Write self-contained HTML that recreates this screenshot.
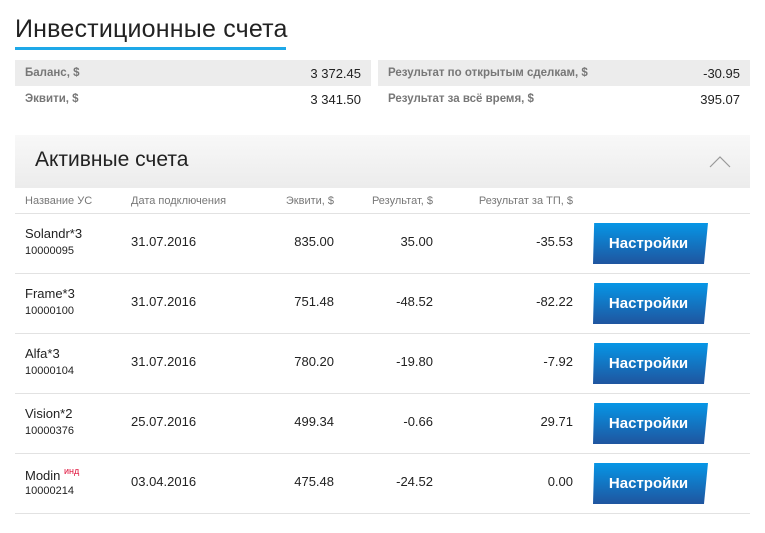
<!DOCTYPE html>
<html><head><meta charset="utf-8"><style>
body{margin:0;background:#fff;font-family:"Liberation Sans",Arial,sans-serif;width:765px;height:533px;position:relative;overflow:hidden;color:#222}
.a{position:absolute;white-space:nowrap}
.h1{left:15px;top:15px;font-size:25px;font-weight:300;color:#222;letter-spacing:0.2px}
.ul{left:15px;top:47px;width:271px;height:3px;background:#1ea8e8}
.bx{position:absolute;height:26px;font-size:12px}
.bx .l{position:absolute;left:10px;top:7px;color:#777;font-weight:bold;font-size:11.5px}
.bx .r{position:absolute;right:10px;top:6px;font-size:13px;color:#222}
.sec{left:15px;top:135px;width:735px;height:53px;background:linear-gradient(#f8f8f8,#ececec)}
.th{font-size:11px;color:#777;top:195px}
.ln{position:absolute;left:15px;width:735px;height:1px;background:#e2e2e2}
.c{font-size:13px;color:#222}
.id{font-size:11px;color:#222}
.btn{position:absolute;left:593px;width:115px;height:41px;background:linear-gradient(#0696e6,#1f559f);clip-path:polygon(1% 0,100% 0,96.5% 100%,0 100%);color:#fff;font-weight:bold;font-size:15px;text-align:center;line-height:41px;text-indent:-4px}
</style></head><body>
<div class="a h1">Инвестиционные счета</div>
<div class="a ul"></div>
<div class="bx" style="left:15px;top:60px;width:356px;background:#ececec"><span class="l">Баланс, $</span><span class="r">3 372.45</span></div>
<div class="bx" style="left:15px;top:86px;width:356px"><span class="l">Эквити, $</span><span class="r">3 341.50</span></div>
<div class="bx" style="left:378px;top:60px;width:372px;background:#ececec"><span class="l">Результат по открытым сделкам, $</span><span class="r">-30.95</span></div>
<div class="bx" style="left:378px;top:86px;width:372px"><span class="l">Результат за всё время, $</span><span class="r">395.07</span></div>
<div class="a sec"></div>
<div class="a" style="left:35px;top:148px;font-size:21px;font-weight:300;color:#222">Активные счета</div>
<svg class="a" style="left:709px;top:155px" width="22" height="13"><path d="M1 12 L11 2 L21 12" stroke="#999" fill="none" stroke-width="1.2"/></svg>
<div class="a th" style="left:25px">Название УС</div>
<div class="a th" style="left:131px">Дата подключения</div>
<div class="a th" style="right:431px">Эквити, $</div>
<div class="a th" style="right:332px">Результат, $</div>
<div class="a th" style="right:192px">Результат за ТП, $</div>
<div class="ln" style="top:213px"></div>

<div class="a c" style="left:25px;top:226px">Solandr*3</div><div class="a id" style="left:25px;top:245px">10000095</div>
<div class="a c" style="left:131px;top:234px">31.07.2016</div><div class="a c" style="right:431px;top:234px">835.00</div><div class="a c" style="right:332px;top:234px">35.00</div><div class="a c" style="right:192px;top:234px">-35.53</div>
<div class="btn" style="top:223px">Настройки</div><div class="ln" style="top:273px"></div>

<div class="a c" style="left:25px;top:286px">Frame*3</div><div class="a id" style="left:25px;top:305px">10000100</div>
<div class="a c" style="left:131px;top:294px">31.07.2016</div><div class="a c" style="right:431px;top:294px">751.48</div><div class="a c" style="right:332px;top:294px">-48.52</div><div class="a c" style="right:192px;top:294px">-82.22</div>
<div class="btn" style="top:283px">Настройки</div><div class="ln" style="top:333px"></div>

<div class="a c" style="left:25px;top:346px">Alfa*3</div><div class="a id" style="left:25px;top:365px">10000104</div>
<div class="a c" style="left:131px;top:354px">31.07.2016</div><div class="a c" style="right:431px;top:354px">780.20</div><div class="a c" style="right:332px;top:354px">-19.80</div><div class="a c" style="right:192px;top:354px">-7.92</div>
<div class="btn" style="top:343px">Настройки</div><div class="ln" style="top:393px"></div>

<div class="a c" style="left:25px;top:406px">Vision*2</div><div class="a id" style="left:25px;top:425px">10000376</div>
<div class="a c" style="left:131px;top:414px">25.07.2016</div><div class="a c" style="right:431px;top:414px">499.34</div><div class="a c" style="right:332px;top:414px">-0.66</div><div class="a c" style="right:192px;top:414px">29.71</div>
<div class="btn" style="top:403px">Настройки</div><div class="ln" style="top:453px"></div>

<div class="a c" style="left:25px;top:466px">Modin <sup style="color:#e0103a;font-size:9px;vertical-align:6px">инд</sup></div><div class="a id" style="left:25px;top:485px">10000214</div>
<div class="a c" style="left:131px;top:474px">03.04.2016</div><div class="a c" style="right:431px;top:474px">475.48</div><div class="a c" style="right:332px;top:474px">-24.52</div><div class="a c" style="right:192px;top:474px">0.00</div>
<div class="btn" style="top:463px">Настройки</div><div class="ln" style="top:513px"></div>
</body></html>
